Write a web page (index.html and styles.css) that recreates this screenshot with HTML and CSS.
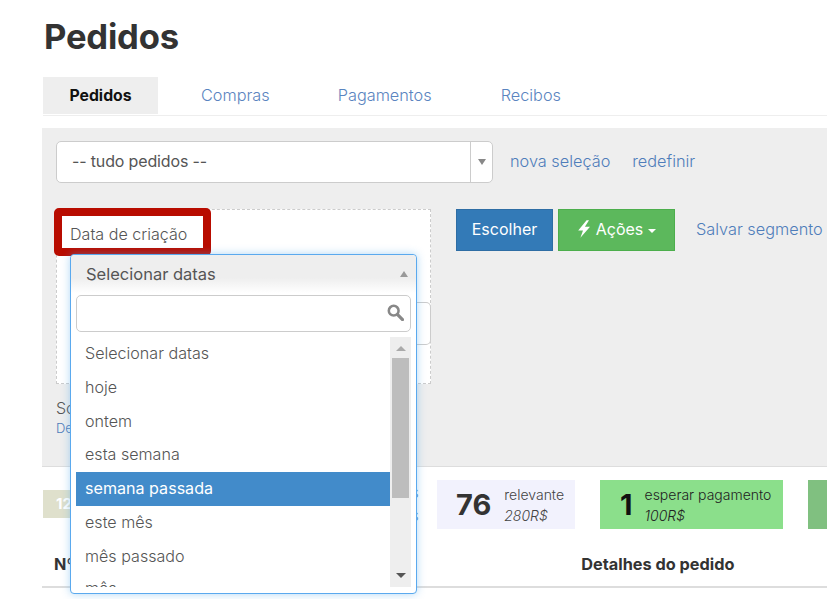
FILE: index.html
```html
<!DOCTYPE html>
<html lang="pt">
<head>
<meta charset="utf-8">
<title>Pedidos</title>
<link rel="stylesheet" href="styles.css">
</head>
<body>
<main class="page">
  <h1 class="title">Pedidos</h1>
  <nav class="tabs">
    <a class="tab tab-active">Pedidos</a>
    <a class="tab tab-compras">Compras</a>
    <a class="tab tab-pag">Pagamentos</a>
    <a class="tab tab-rec">Recibos</a>
  </nav>
  <section class="panel">
    <div class="seg-row">
      <div class="seg-select">
        <span class="seg-value">-- tudo pedidos --</span>
        <span class="seg-arrow"><i class="tri-down"></i></span>
      </div>
      <a class="link">nova seleção</a>
      <a class="link">redefinir</a>
    </div>
    <div class="filter-row">
      <div class="filter-box">
        <div class="filter-input"></div>
      </div>
      <div class="actions">
        <button class="btn btn-blue">Escolher</button>
        <button class="btn btn-green">
          <svg class="bolt" viewBox="0 0 14 18" width="14" height="18"><path d="M9.6 0.3 L1.2 10.4 H6 L3.4 17.7 L13 6.8 H7.9 L12 0.3 Z" fill="#fff"/></svg>
          <span>Ações</span> <i class="tri-caret"></i>
        </button>
        <a class="link save">Salvar segmento</a>
      </div>
    </div>
    <div class="sort-label">So</div>
    <a class="sort-link">De</a>
  </section>
  <section class="stats">
    <div class="badge">12</div>
    <div class="badge-tail">S<br>S</div>
    <div class="stat stat-lilac">
      <b class="stat-num">76</b>
      <div class="stat-text"><span>relevante</span><em>280R$</em></div>
    </div>
    <div class="stat stat-green">
      <b class="stat-num stat-num-dark">1</b>
      <div class="stat-text"><span>esperar pagamento</span><em>100R$</em></div>
    </div>
    <div class="stat stat-dark"></div>
  </section>
  <div class="thead">
    <span class="th-no">Nº</span>
    <span class="th-det">Detalhes do pedido</span>
  </div>

  <div class="marker"><span>Data de criação</span></div>

  <div class="dropdown">
    <div class="dd-head">
      <span>Selecionar datas</span>
      <i class="tri-up"></i>
    </div>
    <div class="dd-search">
      <svg viewBox="0 0 16 16" width="17" height="17"><circle cx="6.3" cy="6.3" r="4.6" fill="none" stroke="#888" stroke-width="2.4"/><path d="M10 10 L14.6 14.6" stroke="#888" stroke-width="3" stroke-linecap="round"/></svg>
    </div>
    <div class="dd-body">
      <ul class="dd-list">
        <li>Selecionar datas</li>
        <li>hoje</li>
        <li>ontem</li>
        <li>esta semana</li>
        <li class="dd-sel">semana passada</li>
        <li>este mês</li>
        <li>mês passado</li>
        <li class="dd-last">mês</li>
      </ul>
      <div class="dd-scroll">
        <i class="sb-up"></i>
        <div class="sb-thumb"></div>
        <i class="sb-down"></i>
      </div>
    </div>
  </div>
</main>
</body>
</html>
```
FILE: styles.css
```css
* { box-sizing: border-box; }
html, body { margin: 0; padding: 0; background: #fff; }
body { font-family: Inter, "Liberation Sans", sans-serif; font-weight: 300; color: #555; overflow: hidden; }
.page { position: relative; width: 827px; height: 599px; overflow: hidden; padding-top: 14px; }
.title { margin: 0 0 0 44px; font-size: 34.6px; line-height: 44px; font-weight: 700; color: #333; height: 63px; letter-spacing: -0.2px; }
.tabs { display: flex; margin-left: 43px; height: 39px; border-bottom: 1px solid #eee; }
.tab { height: 37px; line-height: 36px; font-size: 16.3px; color: #5a84c0; white-space: nowrap; }
.tab-active { width: 115px; background: #eee; color: #111; font-weight: 700; text-align: center; font-size: 15.8px; line-height: 37px; }
.tab-compras { margin-left: 43px; }
.tab-pag { margin-left: 68px; }
.tab-rec { margin-left: 69px; }
.panel { margin: 12px 0 0 42px; height: 339px; background: #eee; border-bottom: 1px solid #ddd; padding: 13px 0 0 14px; }
.seg-row { display: flex; align-items: center; height: 42px; }
.seg-select { width: 437px; height: 42px; flex-shrink: 0; background: #fff; border: 1px solid #ccc; border-radius: 5px; display: flex; align-items: center; justify-content: space-between; }
.seg-value { font-size: 16px; letter-spacing: -0.15px; padding: 0 0 3px 15px; color: #555; font-weight: 400; }
.seg-arrow { width: 22px; height: 40px; border-left: 1px solid #ccc; display: flex; align-items: center; justify-content: center; }
.tri-down { width: 0; height: 0; border: 4px solid transparent; border-top: 6px solid #888; border-bottom: 0; }
.link { font-size: 16.3px; color: #4f7dba; white-space: nowrap; position: relative; top: -1px; }
.seg-row .link { margin-left: 17px; }
.seg-row .link + .link { margin-left: 22px; }
.filter-row { display: flex; margin-top: 26px; }
.filter-box { position: relative; width: 375px; height: 175px; flex-shrink: 0; background: #fff; border: 1px dashed #ccc; }
.filter-input { position: absolute; right: -1px; top: 92px; width: 40px; height: 43px; border: 1px solid #ccc; border-left: 0; border-radius: 0 5px 5px 0; background: #fff; }
.actions { display: flex; align-items: center; height: 42px; margin-left: 25px; }
.btn { height: 42px; flex-shrink: 0; border: 1px solid; font: inherit; font-size: 16px; color: #fff; padding: 0 0 3px; display: flex; align-items: center; justify-content: center; font-weight: 400; }
.btn-blue { width: 97px; background: #337ab7; border-color: #2e6da4; }
.btn-green { width: 117px; margin-left: 5px; background: #5cb85c; border-color: #4cae4c; gap: 5px; }
.tri-caret { display: inline-block; width: 0; height: 0; border: 4px solid transparent; border-top: 4px solid #fff; border-bottom: 0; margin-top: 4px; }
.actions .save { margin-left: 21px; }
.sort-label { margin-top: 15px; font-size: 16px; line-height: 18px; color: #555; }
.sort-link { display: block; margin-top: 3px; font-size: 13px; line-height: 16px; color: #4f7dba; }
.stats { display: flex; height: 50px; margin-top: 13px; position: relative; }
.badge { flex-shrink: 0; margin: 10px 0 0 43px; width: 60px; height: 28px; background: #dfe0cc; color: #fff; font-weight: 700; font-size: 15px; line-height: 28px; padding-left: 13px; }
.badge-tail { position: absolute; left: 411px; top: 2px; font-size: 12px; line-height: 23px; color: #3f6fa8; }
.stat { display: flex; align-items: center; height: 49px; flex-shrink: 0; }
.stat-lilac { margin-left: 334px; width: 138px; background: #f2f2fd; padding-left: 19px; }
.stat-green { margin-left: 25px; width: 183px; background: #8bdf8b; padding-left: 20px; }
.stat-dark { margin-left: 25px; width: 40px; background: #80c080; }
.stat-num { font-size: 29px; line-height: 36px; color: #333; font-weight: 700; }
.stat-num-dark { color: #111; }
.stat-text { display: flex; flex-direction: column; margin-left: 13px; font-size: 14px; line-height: 21px; color: #444; white-space: nowrap; }
.stat-green .stat-text { color: #222; margin-left: 12px; }
.stat-text em { font-style: italic; }
.thead { display: flex; height: 58px; border-bottom: 2px solid #ddd; align-items: center; margin-left: 42px; padding-top: 11px; font-size: 16.3px; font-weight: 700; color: #333; }
.th-no { margin-left: 12px; }
.th-det { margin-left: 507px; }
.marker { position: absolute; left: 54px; top: 208px; width: 157px; height: 48px; border: 8px solid #b80c00; border-radius: 5px; background: #fff; }
.marker span { position: absolute; left: 8px; top: 8px; font-size: 16.1px; line-height: 20px; color: #555; white-space: nowrap; }
.dropdown { position: absolute; left: 70px; top: 254px; width: 347px; height: 340px; background: #fff; border: 1px solid #5aa9ee; border-radius: 4px; box-shadow: 0 0 8px rgba(82,168,236,.45); padding: 0 5px; }
.dd-head { margin: 0 -5px; height: 38px; padding: 0 6px 0 15px; display: flex; align-items: center; justify-content: space-between; font-size: 16.5px; color: #555; font-weight: 400; background: linear-gradient(#eee 60%, #fff); border-radius: 4px 4px 0 0; }
.tri-up { width: 0; height: 0; border: 4px solid transparent; border-bottom: 6px solid #999; border-top: 0; margin-right: 2px; }
.dd-search { height: 37px; margin-top: 2px; border: 1px solid #ccc; border-radius: 5px; background: #fff; display: flex; align-items: center; justify-content: flex-end; padding: 0 6px 3px 0; }
.dd-body { position: relative; display: flex; margin-top: 5px; height: 250px; overflow: hidden; }
.dd-list { list-style: none; margin: 0; padding: 0; flex: 1; font-size: 16.1px; color: #555; }
.dd-list li { height: 33.8px; line-height: 33.8px; padding-left: 9px; }
.dd-list .dd-last { margin-top: -2px; }
.dd-list .dd-sel { background: #428bca; color: #fff; font-weight: 400; }
.dd-scroll { position: relative; width: 21px; background: #eee; }
.sb-thumb { position: absolute; left: 2px; right: 2px; top: 21px; height: 140px; background: #bdbdbd; }
.sb-up { position: absolute; top: 9px; left: 6px; width: 0; height: 0; border: 5px solid transparent; border-bottom: 5px solid #aaa; border-top: 0; }
.sb-down { position: absolute; bottom: 9px; left: 6px; width: 0; height: 0; border: 5px solid transparent; border-top: 5px solid #555; border-bottom: 0; }
```
